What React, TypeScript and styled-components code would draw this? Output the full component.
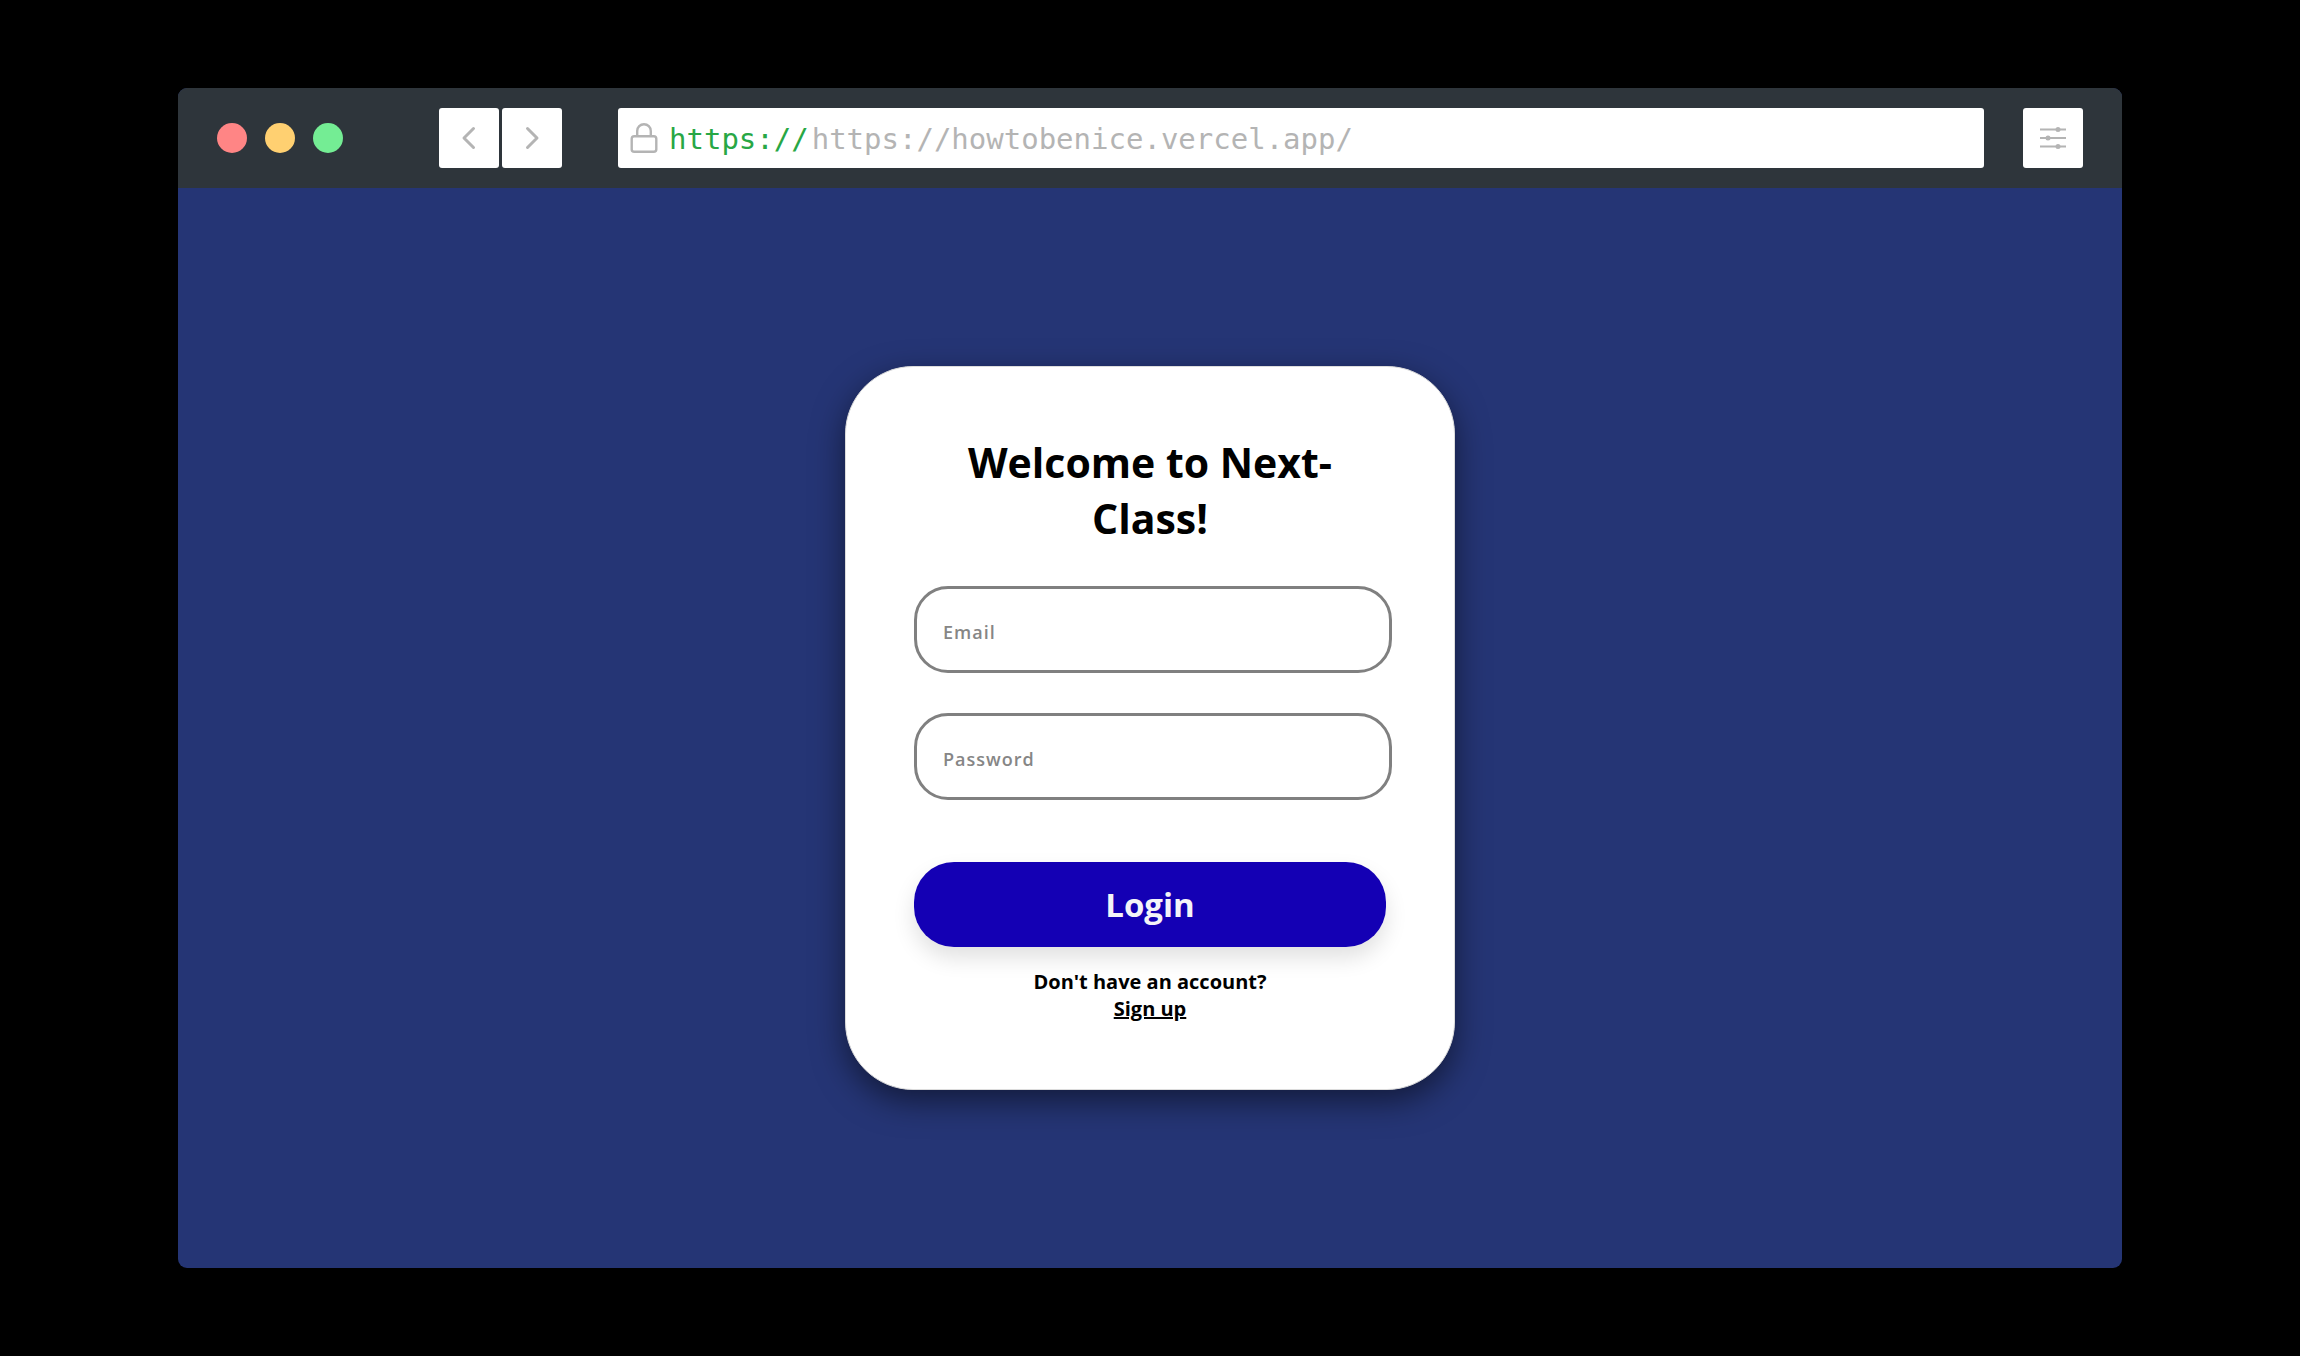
import React from "react";
import styled, { createGlobalStyle } from "styled-components";

const GlobalStyle = createGlobalStyle`
  *, *::before, *::after { box-sizing: border-box; }
  body {
    margin: 0;
    background: #000;
    font-family: "Open Sans", "Noto Sans", sans-serif;
  }
`;

const Page = styled.div`
  display: flex;
  min-height: 100vh;
  padding: 88px 178px;
`;

const BrowserWindow = styled.div`
  display: flex;
  flex: 1;
  flex-direction: column;
  overflow: hidden;
  border-radius: 9px;
  background: #253575;
`;

const Toolbar = styled.header`
  display: flex;
  align-items: center;
  height: 100px;
  padding: 0 39px;
  background: #2e353b;
`;

const Lights = styled.div`
  display: flex;
  gap: 18px;
  margin-right: 96px;
`;

const Light = styled.span<{ $color: string }>`
  width: 30px;
  height: 30px;
  border-radius: 50%;
  background: ${({ $color }) => $color};
`;

const NavGroup = styled.nav`
  display: flex;
  gap: 3px;
  margin-right: 56px;
`;

const ToolButton = styled.button`
  display: flex;
  align-items: center;
  justify-content: center;
  width: 60px;
  height: 60px;
  padding: 0;
  border: 0;
  border-radius: 3px;
  background: #fff;
  color: #b4b4b4;
`;

const AddressBar = styled.div`
  display: flex;
  flex: 1;
  align-items: center;
  height: 60px;
  margin-right: 39px;
  padding: 0 12px;
  border-radius: 3px;
  background: #fff;
  color: #b4b4b4;
`;

const Address = styled.span`
  margin-left: 11px;
  padding-top: 2px;
  font: 29px/40px "DejaVu Sans Mono", monospace;
  white-space: nowrap;
`;

const Scheme = styled.span`
  margin-right: 3px;
  color: #28a745;
`;

const Main = styled.main`
  display: flex;
  flex: 1;
  align-items: center;
  justify-content: center;
`;

const Card = styled.form`
  display: flex;
  flex-direction: column;
  width: 610px;
  padding: 67px 68px;
  border: 1px solid #dcdcdc;
  border-radius: 68px;
  background: #fff;
  box-shadow: 0 11px 32px rgba(0, 0, 0, 0.5);
`;

const Title = styled.h1`
  margin: 0 0 40px;
  font-size: 41px;
  line-height: 56px;
  text-align: center;
`;

const Fields = styled.div`
  display: flex;
  flex-direction: column;
  gap: 40px;
  margin: 0 -6px 62px 0;
`;

const Field = styled.input`
  width: 100%;
  height: 87px;
  padding: 4px 26px 0;
  border: 3px solid #808080;
  border-radius: 34px;
  background: #fff;
  color: #000;
  font: 600 18px/24px "Open Sans", "Noto Sans", sans-serif;
  letter-spacing: 1px;

  &::placeholder {
    color: #868686;
    opacity: 1;
  }
`;

const LoginButton = styled.button`
  height: 85px;
  margin-bottom: 21px;
  border: 0;
  border-radius: 40px;
  background: #1400b4;
  box-shadow: 0 11px 22px rgba(0, 0, 0, 0.12);
  color: #f4f4f8;
  font: 700 33px/44px "Open Sans", "Noto Sans", sans-serif;
`;

const SignUp = styled.div`
  display: flex;
  flex-direction: column;
  align-items: center;
  color: #000;
  font-size: 20px;
  font-weight: 700;
  line-height: 27px;
`;

const SignUpLink = styled.a`
  color: inherit;
`;

const Chevron = ({ d }: { d: string }) => (
  <svg width="24" height="24" viewBox="0 0 24 24" fill="none" stroke="currentColor" strokeWidth="3" strokeLinecap="round" strokeLinejoin="round" aria-hidden="true">
    <path d={d} />
  </svg>
);

const LockIcon = () => (
  <svg width="28" height="32" viewBox="0 0 28 32" fill="none" stroke="currentColor" strokeWidth="2.4" aria-hidden="true">
    <rect x="1.7" y="14.2" width="24.6" height="15.6" rx="2.6" />
    <path d="M7.2 14V9a6.8 6.8 0 0 1 13.6 0v5" />
  </svg>
);

const SlidersIcon = () => (
  <svg width="26" height="24" viewBox="0 0 26 24" aria-hidden="true">
    <path d="M0 3.4h26M0 12h26M0 20.6h26" stroke="currentColor" strokeWidth="2" />
    <circle cx="18" cy="3.4" r="2.5" fill="currentColor" />
    <circle cx="8" cy="12" r="2.5" fill="currentColor" />
    <circle cx="18" cy="20.6" r="2.5" fill="currentColor" />
  </svg>
);

export default function App() {
  return (
    <>
      <GlobalStyle />
      <Page>
        <BrowserWindow>
          <Toolbar>
            <Lights>
              <Light $color="#ff8585" />
              <Light $color="#ffd071" />
              <Light $color="#74ed94" />
            </Lights>
            <NavGroup aria-label="History">
              <ToolButton type="button" aria-label="Back"><Chevron d="M16.5 2.5 7 12l9.5 9.5" /></ToolButton>
              <ToolButton type="button" aria-label="Forward"><Chevron d="M7.5 2.5 17 12l-9.5 9.5" /></ToolButton>
            </NavGroup>
            <AddressBar>
              <LockIcon />
              <Address><Scheme>https://</Scheme>https://howtobenice.vercel.app/</Address>
            </AddressBar>
            <ToolButton type="button" aria-label="Settings"><SlidersIcon /></ToolButton>
          </Toolbar>
          <Main>
            <Card onSubmit={(event) => event.preventDefault()}>
              <Title>Welcome to Next-Class!</Title>
              <Fields>
                <Field type="email" aria-label="Email" placeholder="Email" />
                <Field type="password" aria-label="Password" placeholder="Password" />
              </Fields>
              <LoginButton type="submit">Login</LoginButton>
              <SignUp>
                <span>Don't have an account?</span>
                <SignUpLink href="#signup">Sign up</SignUpLink>
              </SignUp>
            </Card>
          </Main>
        </BrowserWindow>
      </Page>
    </>
  );
}
